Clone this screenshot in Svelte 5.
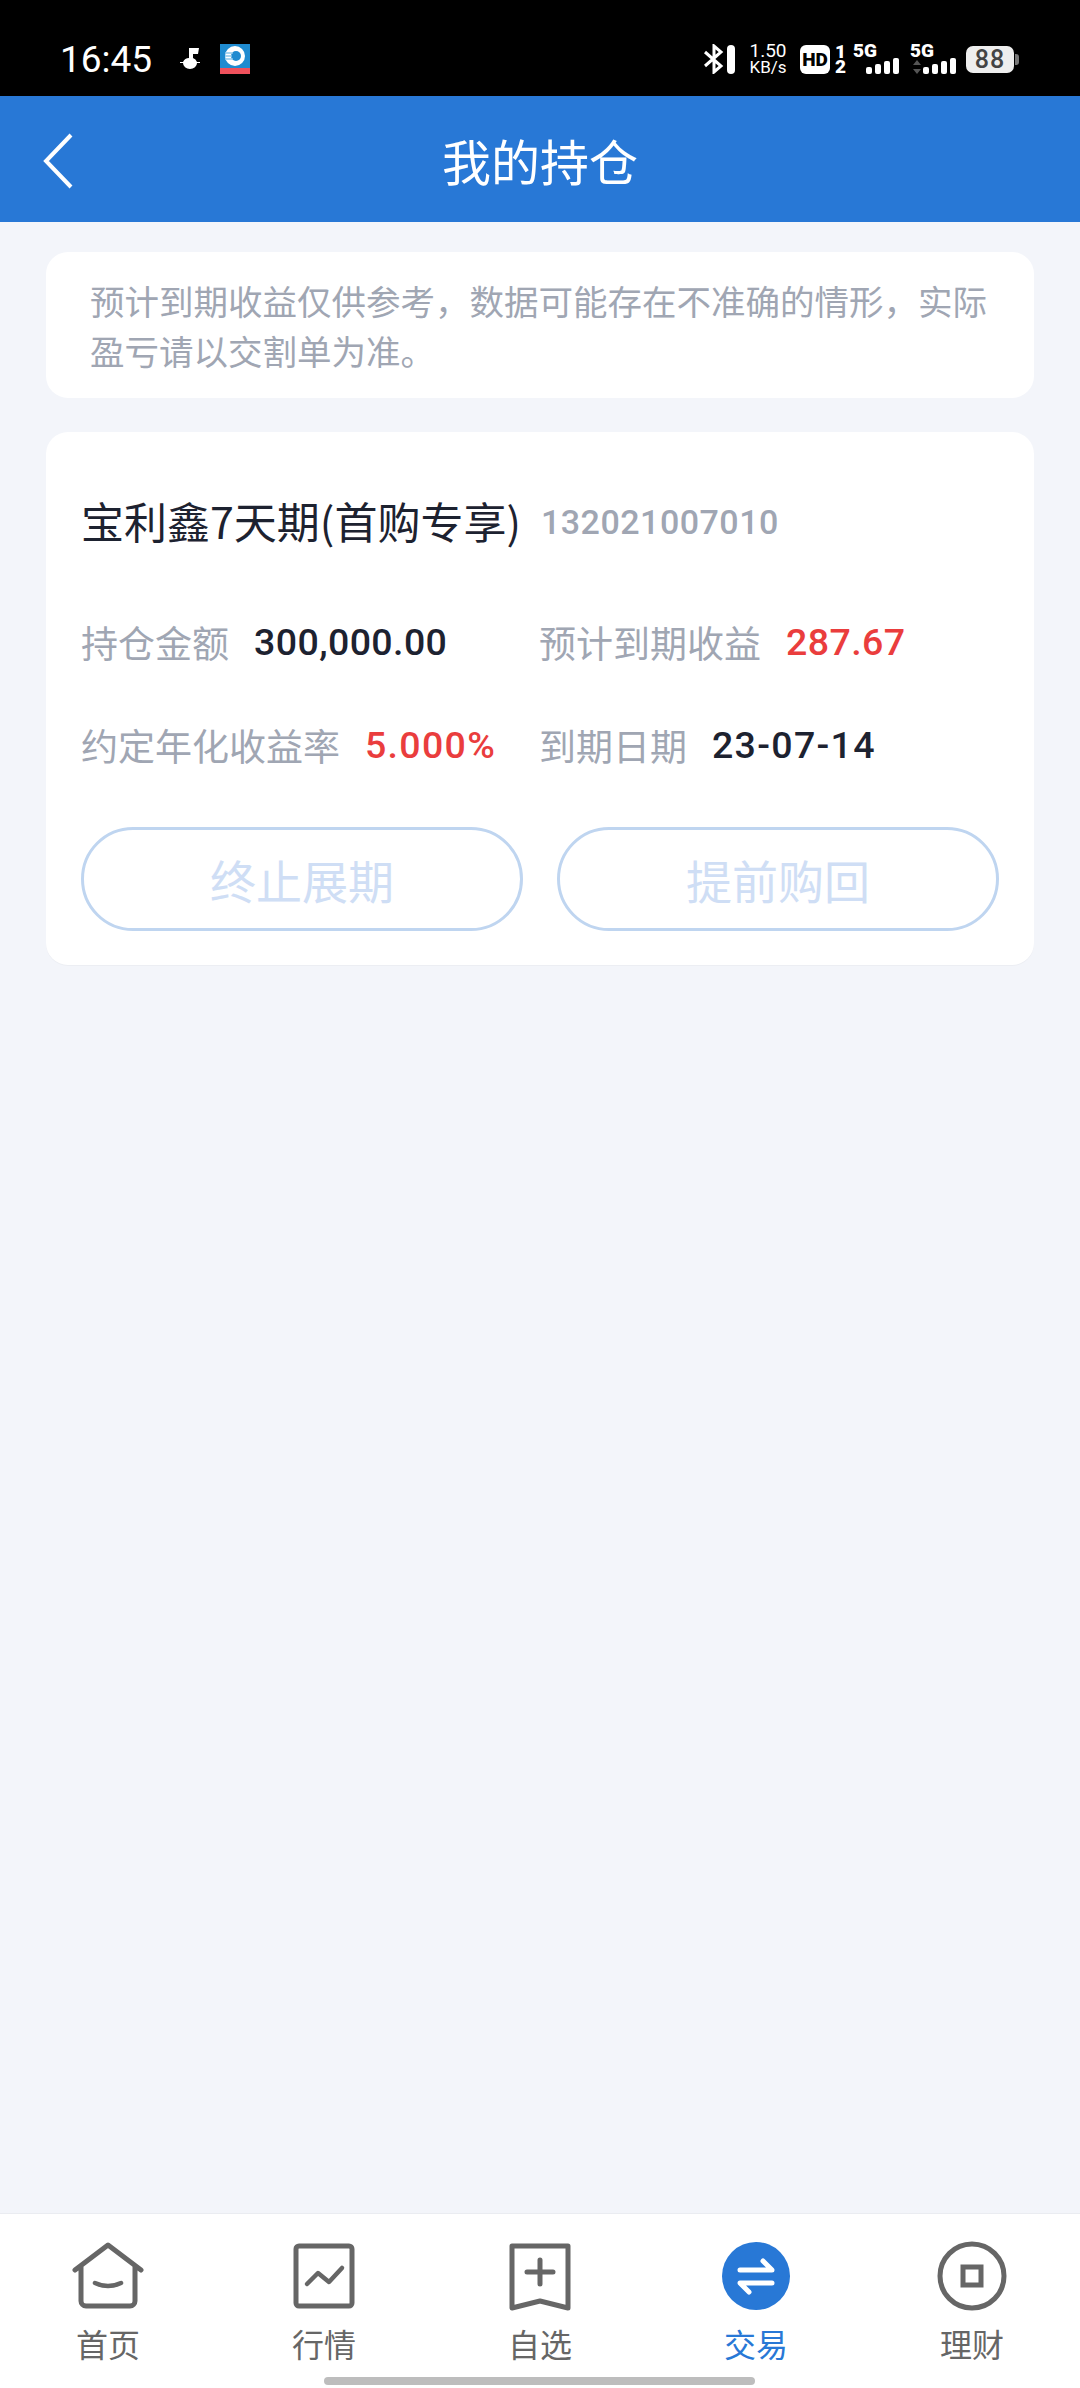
<script>
  const tabs = [
    { id: 'home', label: '首页' },
    { id: 'market', label: '行情' },
    { id: 'watch', label: '自选' },
    { id: 'trade', label: '交易', active: true },
    { id: 'wealth', label: '理财' }
  ]
</script>

<div class="page">
  <div class="status">
    <span class="time">16:45</span>
    <svg class="note" viewBox="0 0 20 24" width="20" height="24">
      <path d="M9 1h10l-1 6h-5v4a7 7 0 0 1 4 4h3v1h-3a7 6 0 0 1-14 0H0v-1h3a7 7 0 0 1 6-4z" fill="#fff" />
    </svg>
    <svg class="app" viewBox="0 0 30 30" width="30" height="30">
      <rect width="30" height="30" fill="#1f8bd0" />
      <rect y="24" width="30" height="6" fill="#f0515c" />
      <circle cx="15" cy="12" r="10" fill="#fff" />
      <circle cx="16" cy="12" r="5" fill="#1f8bd0" />
      <path d="M5 9h8M5 12h7M5 15h8" stroke="#8cc8ec" stroke-width="1.5" />
    </svg>

    <div class="status-right">
      <svg viewBox="0 0 32 30" width="32" height="30">
        <path d="M1 8l16 14-7 6V2l7 6L1 22" fill="none" stroke="#fff" stroke-width="3" />
        <rect x="23" y="1" width="8" height="29" rx="4" fill="#fff" />
      </svg>
      <div class="speed"><span>1.50</span><span class="unit">KB/s</span></div>
      <div class="hd">HD</div>
      <div class="sims"><span>1</span><span>2</span></div>
      <div class="signal">
        <span class="g">5G</span>
        <div class="bars">
          <i style="height:7px"></i><i style="height:10px"></i><i style="height:13px"></i><i style="height:16px"></i>
        </div>
      </div>
      <div class="signal">
        <span class="g">5G</span>
        <div class="bars">
          <svg class="arrows" viewBox="0 0 8 14" width="8" height="14">
            <path d="M4 0l4 5H0zM4 14l4-5H0z" fill="#555" />
          </svg>
          <i style="height:7px"></i><i style="height:10px"></i><i style="height:13px"></i><i style="height:16px"></i>
        </div>
      </div>
      <div class="battery"><span>88</span></div>
    </div>
  </div>

  <header class="nav">
    <svg class="back" viewBox="0 0 32 58" width="32" height="58">
      <path d="M29 3L4 29l25 26" fill="none" stroke="#fff" stroke-width="4" />
    </svg>
    <h1>我的持仓</h1>
  </header>

  <main>
    <p class="notice">预计到期收益仅供参考，数据可能存在不准确的情形，实际盈亏请以交割单为准。</p>

    <section class="card">
      <div class="title">
        <span class="name">宝利鑫7天期(首购专享)</span>
        <span class="code">132021007010</span>
      </div>
      <div class="grid">
        <div class="item"><span class="k">持仓金额</span><span class="v">300,000.00</span></div>
        <div class="item"><span class="k">预计到期收益</span><span class="v red">287.67</span></div>
        <div class="item"><span class="k">约定年化收益率</span><span class="v red wide">5.000%</span></div>
        <div class="item"><span class="k">到期日期</span><span class="v wide">23-07-14</span></div>
      </div>
      <div class="actions">
        <button disabled>终止展期</button>
        <button disabled>提前购回</button>
      </div>
    </section>
  </main>

  <nav class="tabs">
    {#each tabs as tab}
      <div class="tab" class:active={tab.active}>
        <svg viewBox="0 0 72 72" width="72" height="72">
          {#if tab.id === 'home'}
            <path d="M3 30L36 5l33 25M9 26v35a5 5 0 0 0 5 5h44a5 5 0 0 0 5-5V26" fill="none" stroke="#666" stroke-width="5" stroke-linecap="round" stroke-linejoin="round" />
            <path d="M23 43q13 6 26 0" fill="none" stroke="#666" stroke-width="4.5" stroke-linecap="round" />
          {:else if tab.id === 'market'}
            <rect x="8" y="6" width="56" height="60" rx="3" fill="none" stroke="#666" stroke-width="5" />
            <path d="M19 44l11-11 11 9 13-14" fill="none" stroke="#666" stroke-width="4.5" stroke-linecap="round" stroke-linejoin="round" />
          {:else if tab.id === 'watch'}
            <path d="M8 6h56v62l-28-7-28 7z" fill="none" stroke="#666" stroke-width="5" stroke-linejoin="round" />
            <path d="M36 20v24M23 32h26" fill="none" stroke="#666" stroke-width="5" stroke-linecap="round" />
          {:else if tab.id === 'trade'}
            <circle cx="36" cy="36" r="34" fill="#2878d6" />
            <path d="M20 30h32l-9-9M52 43H20l9 9" fill="none" stroke="#fff" stroke-width="5" stroke-linecap="round" stroke-linejoin="round" />
          {:else}
            <circle cx="36" cy="36" r="32" fill="none" stroke="#666" stroke-width="5" />
            <rect x="27" y="27" width="18" height="18" fill="none" stroke="#666" stroke-width="5" />
          {/if}
        </svg>
        <span>{tab.label}</span>
      </div>
    {/each}
    <div class="indicator"></div>
  </nav>
</div>

<style>
  :global(body) {
    margin: 0;
  }

  .page {
    display: flex;
    flex-direction: column;
    width: 1080px;
    height: 2388px;
    background: #f3f5fa;
    font-family: 'Noto Sans CJK SC', sans-serif;
  }

  .status {
    display: flex;
    align-items: center;
    box-sizing: border-box;
    height: 96px;
    padding: 22px 60px 0 60px;
    background: #000;
    color: #fff;
  }

  .time {
    font: 400 37px Roboto, sans-serif;
  }

  .note {
    margin-left: 28px;
  }

  .app {
    margin-left: 20px;
  }

  .status-right {
    display: flex;
    align-items: center;
    margin-left: auto;
    font-family: Roboto, sans-serif;
  }

  .speed {
    display: flex;
    flex-direction: column;
    align-items: center;
    width: 36px;
    margin-left: 14px;
    font-size: 19px;
    line-height: 16px;
  }

  .speed .unit {
    font-size: 17px;
  }

  .hd {
    width: 30px;
    height: 29px;
    margin-left: 14px;
    border-radius: 6px;
    background: #fff;
    color: #000;
    font-size: 19px;
    font-weight: 900;
    line-height: 29px;
    text-align: center;
  }

  .sims {
    display: flex;
    flex-direction: column;
    width: 12px;
    margin-left: 5px;
    font-size: 19px;
    font-weight: 900;
    line-height: 15px;
  }

  .signal {
    display: flex;
    flex-direction: column;
    width: 46px;
    margin-left: 11px;
  }

  .sims + .signal {
    margin-left: 6px;
  }

  .g {
    font-size: 19px;
    font-weight: 900;
    line-height: 14px;
  }

  .bars {
    display: flex;
    align-items: flex-end;
    justify-content: flex-end;
    gap: 3px;
    height: 16px;
  }

  .bars i {
    width: 6px;
    border-radius: 2px;
    background: #fff;
  }

  .arrows {
    margin-right: -1px;
  }

  .battery {
    position: relative;
    width: 48px;
    height: 27px;
    margin: 0 6px 0 10px;
    border-radius: 7px;
    background: #eee;
    color: #444;
    font-size: 25px;
    font-weight: 500;
    line-height: 27px;
    text-align: center;
    letter-spacing: 1px;
  }

  .battery::after {
    content: '';
    position: absolute;
    top: 8px;
    right: -5px;
    width: 4px;
    height: 11px;
    border-radius: 0 3px 3px 0;
    background: #777;
  }

  .nav {
    position: relative;
    display: flex;
    align-items: center;
    justify-content: center;
    height: 126px;
    background: #2878d6;
  }

  .back {
    position: absolute;
    top: 36px;
    left: 42px;
  }

  h1 {
    margin: 0;
    color: #fff;
    font-size: 49px;
    font-weight: 400;
  }

  main {
    display: flex;
    flex: 1;
    flex-direction: column;
    gap: 34px;
    padding: 30px 46px 0;
  }

  .notice {
    box-sizing: border-box;
    margin: 0;
    padding: 23px 30px 23px 44px;
    border-radius: 22px;
    background: #fff;
    color: #a0a6b3;
    font-size: 34.5px;
    line-height: 50px;
  }

  .card {
    box-sizing: border-box;
    height: 533px;
    padding: 0 35px;
    border-radius: 22px;
    background: #fff;
    box-shadow: 0 1px 0 #eceef3;
  }

  .title {
    display: flex;
    align-items: center;
    gap: 20px;
    height: 180px;
  }

  .name {
    padding-bottom: 4px;
    color: #1d2230;
    font-size: 43px;
  }

  .code {
    color: #a0a6b3;
    font: 500 34px Roboto, sans-serif;
    letter-spacing: 0.5px;
  }

  .grid {
    display: grid;
    grid-template-columns: 458px 1fr;
    grid-auto-rows: 103px;
  }

  .item {
    display: flex;
    align-items: center;
    gap: 25px;
    height: 60px;
  }

  .k {
    color: #a0a6b3;
    font-size: 37px;
  }

  .v {
    color: #1d2230;
    font: 500 37.5px Roboto, sans-serif;
    letter-spacing: 0.4px;
  }

  .v.wide {
    letter-spacing: 1.3px;
  }

  .red {
    color: #ea3d3d;
  }

  .actions {
    display: flex;
    gap: 34px;
    margin-top: 9px;
  }

  button {
    flex: 1;
    height: 104px;
    padding: 0;
    border: 3px solid #bfd5f0;
    border-radius: 52px;
    background: #fff;
    color: #cfdef5;
    font-family: inherit;
    font-size: 46px;
  }

  .tabs {
    position: relative;
    display: grid;
    grid-template-columns: repeat(5, 1fr);
    height: 174px;
    border-top: 1px solid #eaecf1;
    background: #fff;
  }

  .tab {
    display: flex;
    flex-direction: column;
    align-items: center;
    padding-top: 26px;
    color: #666;
    font-size: 32px;
    line-height: 46px;
  }

  .tab span {
    margin-top: 8px;
  }

  .tab.active {
    color: #2878d6;
  }

  .indicator {
    position: absolute;
    bottom: 3px;
    left: 324px;
    width: 431px;
    height: 8px;
    border-radius: 4px;
    background: #bdbdbd;
  }
</style>
